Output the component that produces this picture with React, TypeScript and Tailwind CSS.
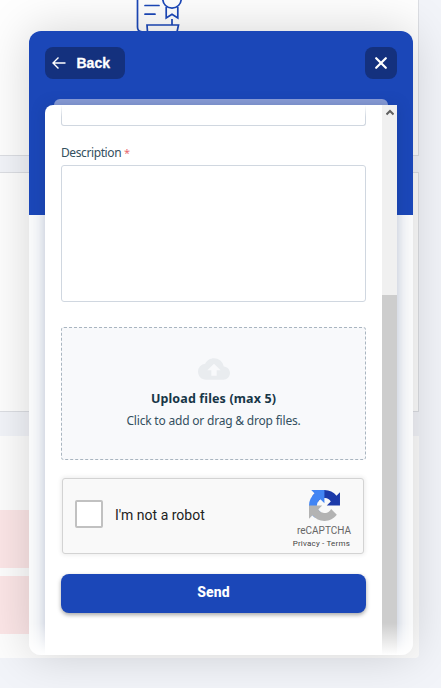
import { MdCloudUpload } from "react-icons/md";

function CertificateIcon() {
  return (
    <svg
      className="ml-[135px] block"
      width="48"
      height="34"
      viewBox="0 0 48 34"
      fill="none"
      stroke="#1b47b8"
      strokeWidth="1.7"
    >
      <path d="M2.500 0V27Q2.500 31.500 6.500 31.500M12.500 32L12 25H43.500L42 32M37 19V25" />
      <path d="M10 5.500H24M10 14.200H20" strokeLinecap="round" />
      <circle cx="37" cy="-1" r="9.200" />
      <path d="M31.200 7V18L37 14.200L42.800 18V7" />
    </svg>
  );
}

function PageBackground() {
  return (
    <div className="flex h-[688px] w-[419px] flex-col">
      <div className="h-[156px] border-r border-b border-[#dcdee3] bg-[#fefefe]">
        <CertificateIcon />
      </div>
      <div className="mt-4 h-[240px] border-y border-r border-[#dcdee3] bg-[#fefefe]" />
      <div className="mt-6 flex h-[222px] flex-col gap-2 rounded-br-sm bg-[#fdfdfd] pt-[74px]">
        <div className="h-[58px] w-[400px] bg-[#fce6e7]" />
        <div className="h-[58px] w-[400px] bg-[#fce6e7]" />
      </div>
    </div>
  );
}

function DialogHeader() {
  return (
    <div className="flex h-[68px] justify-between px-4 pt-4">
      <button className="flex h-8 w-20 items-center rounded-lg bg-[#14317e] pl-[7px] text-white">
        <svg width="14" height="14" viewBox="0 0 14 14" fill="none" stroke="currentColor" strokeWidth="1.4">
          <path d="M13.500 7H1M6.500 1.500L1 7L6.500 12.500" />
        </svg>
        <span className="ml-[10.5px] font-['Liberation_Sans',sans-serif] text-[14px] leading-4 font-bold [-webkit-text-stroke:0.3px_white]">
          Back
        </span>
      </button>
      <button className="flex size-8 items-center justify-center rounded-lg bg-[#14317e] text-white">
        <svg width="12" height="12" viewBox="0 0 12 12" stroke="currentColor" strokeWidth="2.2" strokeLinecap="round">
          <path d="M1.200 1.200L10.800 10.800M10.800 1.200L1.200 10.800" />
        </svg>
      </button>
    </div>
  );
}

function UploadArea() {
  return (
    <div className="mt-[25px] flex h-[133px] shrink-0 flex-col items-center rounded-[3px] border border-dashed border-[#a9b5c0] bg-[#f8f9fb] pt-[25px] text-[#173647]">
      <MdCloudUpload className="size-8 text-[#e9ecef]" />
      <p className="mt-1 text-[12.500px] leading-5 font-bold tracking-[0.13px] whitespace-nowrap">
        Upload files (max 5)
      </p>
      <p className="mt-[2px] text-[12px] leading-5 tracking-[-0.2px] whitespace-nowrap text-[#345060]">
        Click to add or drag &amp; drop files.
      </p>
    </div>
  );
}

function RecaptchaLogo() {
  return (
    <svg width="31" height="31" viewBox="0 0 64 64">
      <path
        fill="#1c3aa9"
        d="M64 31.955a33 33 0 0 0-.037-1.380V4.687l-7.157 7.157C50.948 4.674 42.033.093 32.050.093c-10.389 0-19.622 4.960-25.458 12.640l11.730 11.854a15.550 15.550 0 0 1 4.754-5.334c2.050-1.600 4.952-2.906 8.968-2.906.485 0 .860.057 1.135.163 4.976.393 9.288 3.140 11.828 7.124l-8.304 8.304 27.297.017"
      />
      <path
        fill="#4285f4"
        d="M31.862.094a33 33 0 0 0-1.380.040H4.594l7.157 7.157C4.580 13.147 0 22.060 0 32.046c0 10.389 4.960 19.622 12.640 25.458l11.854-11.730a15.550 15.550 0 0 1-5.334-4.754c-1.600-2.050-2.906-4.952-2.906-8.968 0-.485.057-.860.163-1.135.393-4.976 3.140-9.288 7.124-11.828l8.304 8.304.017-27.297"
      />
      <path
        fill="#b3b3b3"
        d="M.001 32.045a33 33 0 0 0 .037 1.380v25.888l7.157-7.157c5.858 7.170 14.773 11.751 24.756 11.751 10.389 0 19.622-4.960 25.458-12.640L45.679 39.413a15.550 15.550 0 0 1-4.754 5.334c-2.050 1.600-4.952 2.906-8.968 2.906-.485 0-.860-.057-1.135-.163-4.976-.393-9.288-3.140-11.828-7.124l8.304-8.304-27.297-.017"
      />
    </svg>
  );
}

function Recaptcha() {
  return (
    <div className="mt-[18px] ml-px flex h-[76px] w-[302px] shrink-0 rounded-[3px] border border-[#d3d3d3] bg-[#f9f9f9] shadow-[0_0_4px_1px_rgba(0,0,0,0.08)]">
      <div className="mt-[21px] ml-3 size-7 rounded-[2px] border-2 border-[#c1c1c1] bg-white" />
      <span className="mt-[28px] ml-3 font-[Roboto,sans-serif] text-[14px] leading-[17px] whitespace-nowrap text-[#222]">
        I'm not a robot
      </span>
      <div className="mt-[11px] mr-[11px] ml-auto flex flex-col items-end font-[Roboto,sans-serif] text-[#666]">
        <div className="mr-[12px]">
          <RecaptchaLogo />
        </div>
        <span className="mt-[5px] mr-px text-[10px] leading-[10px]">reCAPTCHA</span>
        <span className="mt-[4px] mr-[2px] text-[8px] leading-[8px] tracking-[0.2px] whitespace-nowrap text-[#444]">
          Privacy - Terms
        </span>
      </div>
    </div>
  );
}

function ReportForm() {
  return (
    <div className="flex w-[337px] flex-col px-4">
      <div className="h-[21px] shrink-0 rounded-b-[3px] border-x border-b border-[#d0d7e0]" />
      <label className="mt-[18px] h-[21px] text-[12px] leading-[18px] tracking-[-0.4px] text-[#345060]">
        Description <span className="text-[11px] text-[#e86a6e]">*</span>
      </label>
      <div className="h-[137px] shrink-0 rounded-[3px] border border-[#d0d7e0] bg-white" />
      <UploadArea />
      <Recaptcha />
      <button className="mt-5 h-[39px] shrink-0 rounded-lg bg-[#1b47b8] pb-[2px] font-[Roboto,sans-serif] text-[14px] font-extrabold tracking-[0.1px] text-white shadow-[0_2px_4px_rgba(0,0,0,0.35)]">
        Send
      </button>
    </div>
  );
}

function Scrollbar() {
  return (
    <div className="flex w-[15px] flex-col bg-[#f0f0f0]">
      <div className="flex h-[190px] justify-center pt-[4px]">
        <svg width="8" height="7" viewBox="0 0 8 7" fill="none" stroke="#606060" strokeWidth="2">
          <path d="M0.500 5.500L4 2L7.500 5.500" />
        </svg>
      </div>
      <div className="flex-1 bg-[#cdcdcd]" />
    </div>
  );
}

export default function App() {
  return (
    <div className="relative h-[688px] w-[441px] overflow-hidden bg-[#f2f4f9] font-['Noto_Sans',sans-serif]">
      <PageBackground />

      {/* Dialog */}
      <div className="absolute top-[31px] left-[29px] h-[624px] w-[384px] rounded-xl shadow-[0_0_48px_rgba(0,0,0,0.17)]">
        <div className="flex h-full flex-col overflow-hidden rounded-xl bg-[linear-gradient(#1b47b8_184px,#f8f9fa_184px)]">
          <DialogHeader />
          <div className="mx-[25px] h-[6px] shrink-0 rounded-t-lg bg-[#8c9fd8]" />
          <div className="mx-4 flex h-[550px] overflow-hidden rounded-tl-lg bg-white shadow-[0_0_14px_rgba(20,50,110,0.28)]">
            <ReportForm />
            <Scrollbar />
          </div>
        </div>
        {/* Fades at the edges of the scrolled area */}
        <div className="absolute top-[74px] left-6 h-3 w-[328px] bg-linear-to-b from-white to-white/0" />
        <div className="absolute bottom-0 left-0 h-8 w-full rounded-b-xl bg-linear-to-b from-white/0 to-white" />
      </div>
    </div>
  );
}
